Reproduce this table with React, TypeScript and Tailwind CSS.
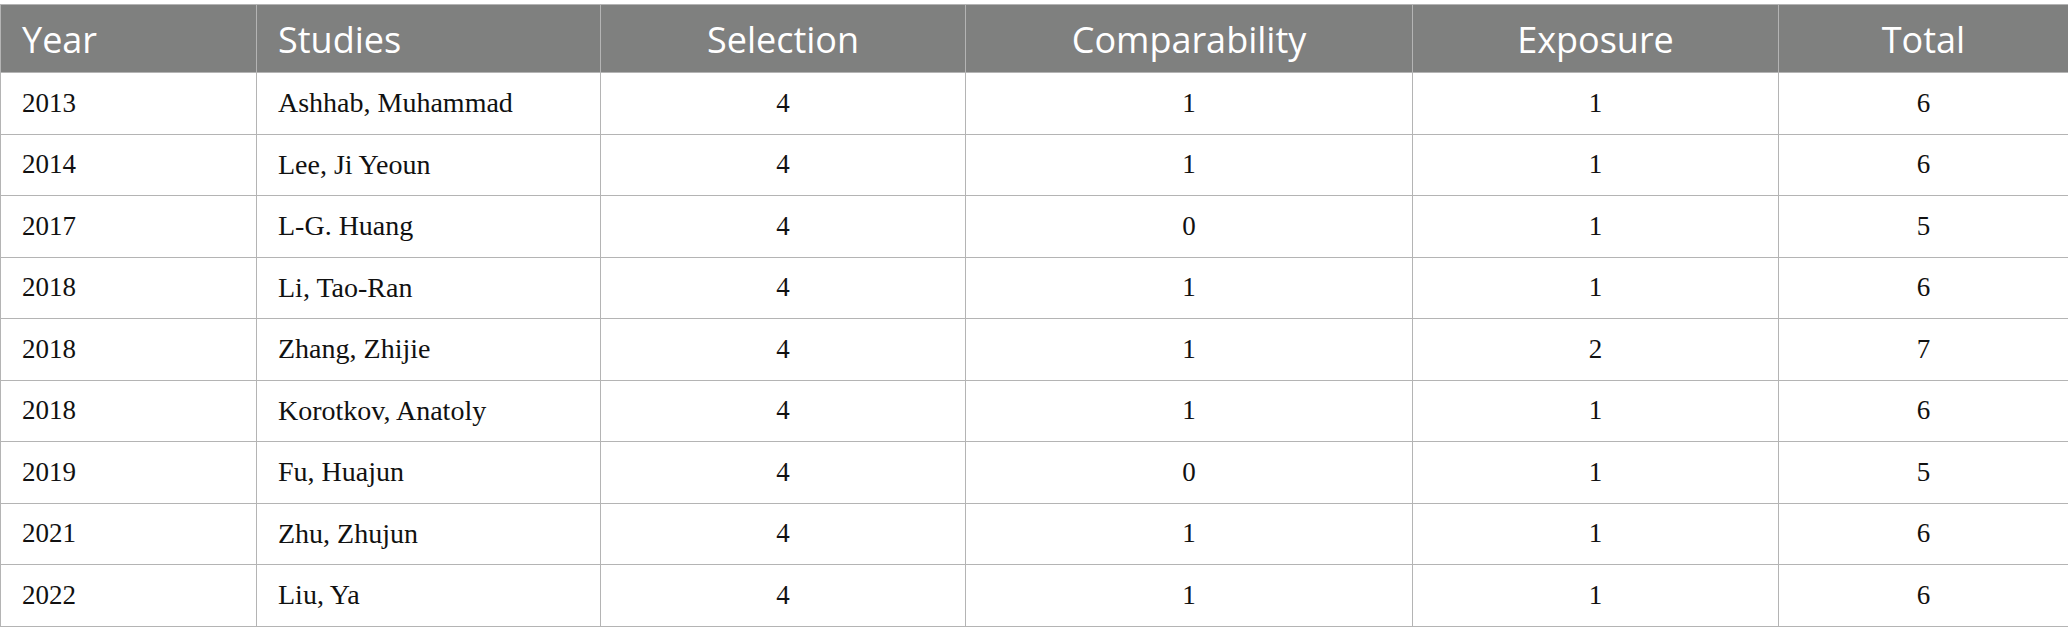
import React from "react";

const rows: [string, string, string, string, string, string][] = [
  ["2013", "Ashhab, Muhammad", "4", "1", "1", "6"],
  ["2014", "Lee, Ji Yeoun", "4", "1", "1", "6"],
  ["2017", "L-G. Huang", "4", "0", "1", "5"],
  ["2018", "Li, Tao-Ran", "4", "1", "1", "6"],
  ["2018", "Zhang, Zhijie", "4", "1", "2", "7"],
  ["2018", "Korotkov, Anatoly", "4", "1", "1", "6"],
  ["2019", "Fu, Huajun", "4", "0", "1", "5"],
  ["2021", "Zhu, Zhujun", "4", "1", "1", "6"],
  ["2022", "Liu, Ya", "4", "1", "1", "6"],
];

const headers = ["Year", "Studies", "Selection", "Comparability", "Exposure", "Total"];

export default function App() {
  return (
    <div className="w-[2068px] h-[644px] bg-white pt-[4px]">
      <table className="w-full table-fixed border-collapse">
        <colgroup>
          <col className="w-[256px]" />
          <col className="w-[344px]" />
          <col className="w-[365px]" />
          <col className="w-[447px]" />
          <col className="w-[366px]" />
          <col className="w-[290px]" />
        </colgroup>
        <thead>
          <tr className="h-[68px] bg-[#7f807f]">
            {headers.map((h, i) => (
              <th
                key={h}
                className={`border border-[#b4b4b4] px-[21px] pt-[2px] font-normal text-white text-[36px] leading-none font-['Open_Sans',sans-serif] ${
                  i < 2 ? "text-left" : "text-center"
                }`}
              >
                {h}
              </th>
            ))}
          </tr>
        </thead>
        <tbody>
          {rows.map((r, ri) => (
            <tr key={ri} className="h-[61.5px]">
              {r.map((c, ci) => (
                <td
                  key={ci}
                  className={`border border-[#b4b4b4] px-[21px] leading-none text-[#111] font-['Liberation_Serif',serif] ${
                    ci === 1 ? "text-[28px]" : "text-[27px]"
                  } ${ci < 2 ? "text-left" : "text-center"}`}
                >
                  {c}
                </td>
              ))}
            </tr>
          ))}
        </tbody>
      </table>
    </div>
  );
}
